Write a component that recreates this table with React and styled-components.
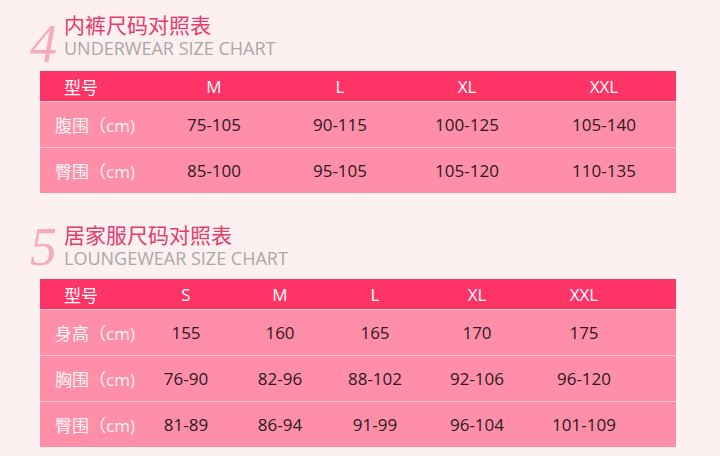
import styled, { createGlobalStyle } from "styled-components";

const GlobalStyle = createGlobalStyle`
	html, body {
		margin: 0;
		padding: 0;
		background: #fdf0f0;
		overflow: hidden;
	}
	body {
		font-family: "Open Sans", "Noto Sans CJK SC", sans-serif;
	}
`;

const underwear = {
	cols: "110px 128px 124px 130px 144px",
	sizes: ["M", "L", "XL", "XXL"],
	rows: [
		["腹围", ["75-105", "90-115", "100-125", "105-140"]],
		["臀围", ["85-100", "95-105", "105-120", "110-135"]],
	],
};

const lounge = {
	cols: "100px 92px 96px 94px 110px 104px 40px",
	sizes: ["S", "M", "L", "XL", "XXL", ""],
	rows: [
		["身高", ["155", "160", "165", "170", "175", ""]],
		["胸围", ["76-90", "82-96", "88-102", "92-106", "96-120", ""]],
		["臀围", ["81-89", "86-94", "91-99", "96-104", "101-109", ""]],
	],
};

const SizeTable = ({ data }) => (
	<Table $cols={data.cols}>
		<HeadCell $first>型号</HeadCell>
		{data.sizes.map((s, i) => (
			<HeadCell key={i}>{s}</HeadCell>
		))}
		{data.rows.map(([label, values]) => [
			<LabelCell key={label}>{label}（cm)</LabelCell>,
			...values.map((v, i) => <Cell key={label + i}>{v}</Cell>),
		])}
	</Table>
);

const App = () => {
	return (
		<Page>
			<GlobalStyle />
			<Section $top={9} $gap={14}>
				<TitleRow>
					<Numeral $drop={17}>4</Numeral>
					<TitleText>
						<CnTitle>内裤尺码对照表</CnTitle>
						<EnTitle>UNDERWEAR SIZE CHART</EnTitle>
					</TitleText>
				</TitleRow>
				<SizeTable data={underwear} />
			</Section>
			<Section $top={26} $gap={12}>
				<TitleRow>
					<Numeral $drop={10}>5</Numeral>
					<TitleText>
						<CnTitle>居家服尺码对照表</CnTitle>
						<EnTitle>LOUNGEWEAR SIZE CHART</EnTitle>
					</TitleText>
				</TitleRow>
				<SizeTable data={lounge} />
			</Section>
		</Page>
	);
};

const Page = styled.div`
	width: 720px;
	height: 456px;
	padding-left: 40px;
	box-sizing: border-box;
	display: flex;
	flex-direction: column;
`;

const Section = styled.section`
	margin-top: ${(p) => p.$top}px;
	display: flex;
	flex-direction: column;
	gap: ${(p) => p.$gap}px;
`;

const TitleRow = styled.div`
	display: flex;
	align-items: flex-start;
	height: 48px;
	margin-left: -13px;
`;

const Numeral = styled.div`
	width: 34px;
	margin-left: 3px;
	margin-top: ${(p) => p.$drop}px;
	font-family: "Liberation Serif", serif;
	font-style: italic;
	font-size: 54px;
	line-height: 36px;
	color: #f5aabd;
`;

const TitleText = styled.div`
	display: flex;
	flex-direction: column;
`;

const CnTitle = styled.div`
	font-family: "Noto Sans CJK SC", sans-serif;
	font-size: 21px;
	line-height: 30px;
	color: #e83a6c;
`;

const EnTitle = styled.div`
	font-size: 18px;
	line-height: 18px;
	color: #a9a9a9;
`;

const Table = styled.div`
	width: 636px;
	display: grid;
	grid-template-columns: ${(p) => p.$cols};
	grid-template-rows: 30px;
	grid-auto-rows: 46px;
	background: #ff8fa8;
`;

const HeadCell = styled.div`
	background: #ff3466;
	color: #ffffff;
	font-size: 17px;
	display: flex;
	align-items: center;
	justify-content: ${(p) => (p.$first ? "flex-start" : "center")};
	padding-left: ${(p) => (p.$first ? "24px" : "0")};
`;

const Cell = styled.div`
	border-top: 1px solid #ffc4d1;
	color: #2b1a1e;
	font-size: 17px;
	display: flex;
	align-items: center;
	justify-content: center;
`;

const LabelCell = styled(Cell)`
	justify-content: flex-start;
	padding-left: 15px;
	color: #fff3f6;
	white-space: nowrap;
`;

export default App;
